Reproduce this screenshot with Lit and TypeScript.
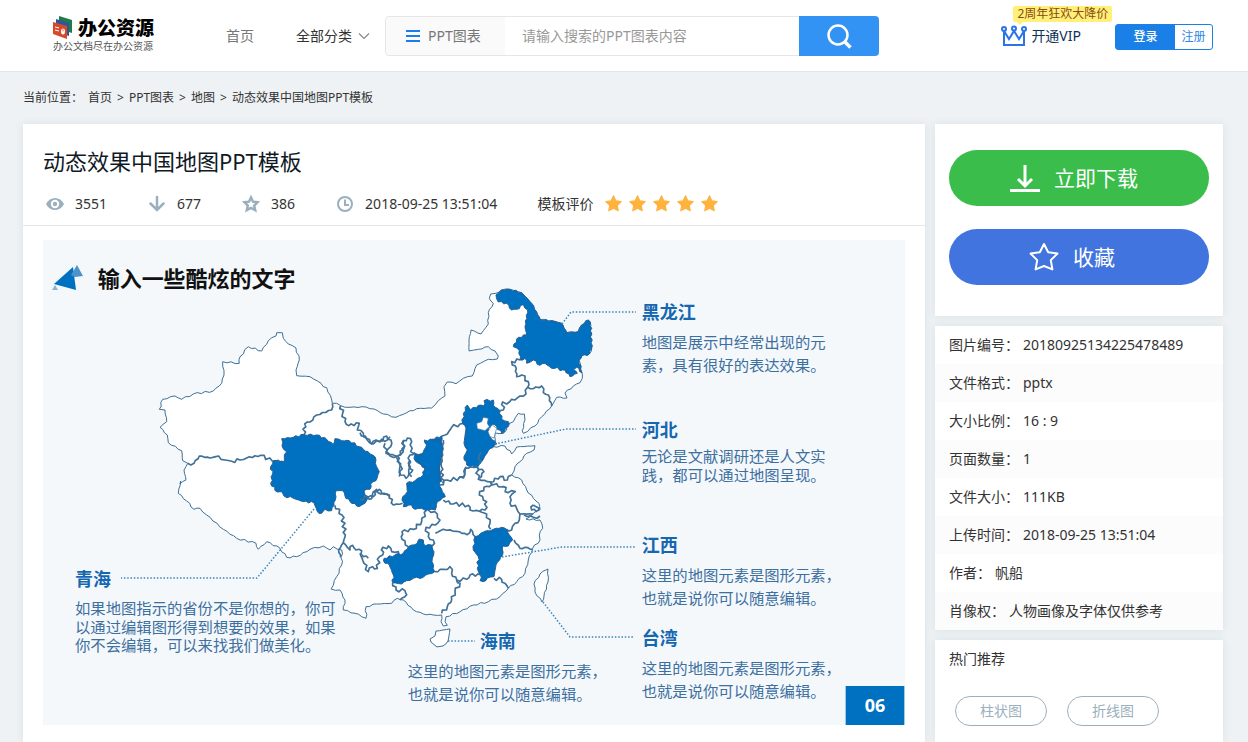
import { LitElement, html, svg, css } from "lit";
import { customElement, property } from "lit/decorators.js";

type Pt = [number, number];

/* Turns a coarse list of points into a slightly ragged border line. */
function border(points: string, step: number, amp: number, closed = false): string {
  const pts = points
    .trim()
    .split(/\s+/)
    .map((p) => p.split(",").map(Number) as Pt);
  if (closed) pts.push(pts[0]);
  let d = `M${pts[0][0]} ${pts[0][1]}`;
  let side = 1;
  for (let i = 1; i < pts.length; i++) {
    const [ax, ay] = pts[i - 1];
    const [bx, by] = pts[i];
    const len = Math.hypot(bx - ax, by - ay);
    const n = Math.max(1, Math.round(len / step));
    for (let k = 1; k < n; k++) {
      const t = k / n;
      const noise = Math.abs(Math.sin(ax * 12.9 + by * 78.2 + k * 37.7));
      const off = (side * amp * noise) / (len || 1);
      side = -side;
      d += `L${(ax + (bx - ax) * t - (by - ay) * off).toFixed(1)} ${(ay + (by - ay) * t + (bx - ax) * off).toFixed(1)}`;
    }
    d += `L${bx} ${by}`;
  }
  return closed ? d + "Z" : d;
}

const COAST =
  "276.7,332.7 282.3,332.7 283.3,338.3 288.3,344 296,348 299.3,360 296,370 296.7,375.7 310,376.7 321,383.3 323.3,386.7 326.7,387.7 331.7,400 332.3,403.3 336.7,403.3 340.7,405.7 350,407.3 366,407 374,409 383.3,414 396,417.3 406.7,412.7 416.7,408.7 431.7,408 438.3,400.7 445,396 444,386.7 447.3,382 456,383.7 463.3,378.3 472.3,376 476.7,365 488.3,359.3 497.3,359 498.3,356 495,351 488.3,346.7 478.3,349.3 469,351 469,340 471,330 481,334 488.3,324 488.3,312.7 493.3,303.3 489.3,298.3 490.7,294 496,293.3 501.7,290 510,289.3 521.7,292.7 531.7,303.3 540.3,319.7 551.7,320.7 561.7,323.3 566.7,332.7 578.3,331.7 581.7,325 588.3,320 590,321.7 591.7,348.3 589.3,354 581.7,356 579,360 581.7,371.7 582.3,378.3 580,382.7 573.3,386 565,393 567,398 556.7,397.3 551.7,406 541.7,416.7 535,426 523.3,433.3 522.3,430.7 525,420 524.3,414 518.3,413.3 513.3,421.7 506.7,424 506.7,430 503.3,433.3 495,433 495,443.3 493.3,446.7 505,446 511.7,454 516.7,447 535,445.7 534,450 526.7,453.3 520,461.7 515,466.7 511.7,475 521.7,480 526.7,490 533.3,498.3 539,503.3 540,510 533.3,513.3 526,519 540,520 542.7,528.3 539.3,535 540,540 532.7,548.3 528.3,560 525,573.3 516.7,581.7 508.3,588.3 500,596.7 488.3,601.7 473.3,605 460,611.7 446,616.7 445,621.7 447.3,625.3 443.3,626 441,621.7 441.7,615 433.3,615 423.3,614 413.3,610 403.3,600 397.3,598.3 391.7,603.3 376.7,604 366,606.7 366,618.3 361.7,616.7 355,613.3 343.3,610 345,600 340,590 331,589 336.7,576.7 341.7,565 341.7,550 333.3,546.7 330,550 323.3,546 310,549.3 296.7,556.7 286.7,557.3 280,548.3 266.7,541.7 258.3,549.3 256,543.3 236.7,538.3 223.3,529.3 206.7,515 200,508.3 194,509.3 186.7,501 178.3,493.3 180.7,481 180,484 186,480 184,470 187.7,463.3 182.7,460.7 181.7,450.7 168.3,442.7 167.3,435 160,427.3 166.7,421.7 165,410 159.3,409.3 162.7,399.3 175,396 181.7,399.3 193.3,394 213.3,391 221.7,383.3 224,375 222.7,361.7 239.3,363.3 240,356.7 248.3,346.7 261.7,351 268.3,340.7 276,336";

interface Layer {
  at: string;
  fills: string[];
  lines: string[];
}

const LAYERS: Layer[] = [
  {
    at: "translate(150 320) scale(.3333)",
    fills: [
      "395,356 430,352 462,344 500,345 530,358 550,374 555,356 575,362 598,362 628,380 640,388 668,405 678,420 680,440 688,455 678,482 662,492 660,508 642,512 645,525 655,530 645,550 628,560 600,545 585,528 578,512 558,512 556,540 545,572 525,568 515,580 502,575 492,548 460,545 430,535 402,528 395,515 382,516 362,490 368,462 362,440 370,422 403,426 403,405 410,395 396,378",
    ],
    lines: [
      "113,430 132,430 148,408 180,414 206,408 225,420 245,424 270,420 290,414 332,406 366,422 403,426",
      "462,344 464,312 480,306 500,285 545,270 547,250",
      "572,257 578,280 585,305 596,317 628,310 622,330 640,340 650,355 670,372 680,362 712,360 720,350",
      "555,556 576,585 586,645 580,668 600,690 608,676 618,690 635,692 640,710 655,715",
      "645,530 670,530 680,508 692,522 712,524 720,530",
      "580,668 566,690 572,712",
    ],
  },
  {
    at: "translate(360 280) scale(.3333)",
    fills: [
      "408,45 425,30 450,28 485,38 515,70 541,119 575,122 605,130 620,158 655,155 665,135 685,120 692,128 695,205 688,222 665,228 657,240 666,278 650,262 640,270 652,280 630,290 615,270 600,272 592,262 575,265 555,250 540,256 520,240 500,250 495,235 480,240 478,210 460,200 475,172 500,165 495,140 503,90 490,74 470,88 455,90 440,70 415,66",
      "310,400 322,375 332,390 355,376 372,378 372,362 400,360 400,376 420,392 425,418 445,425 445,440 425,460 410,440 398,432 385,445 390,470 410,492 385,512 365,545 352,562 320,555 312,530 322,510 312,490 318,445 308,430",
      "165,520 195,525 203,490 215,478 245,468 247,510 238,560 244,605 195,605 190,590 195,565 175,550 162,535",
    ],
    lines: [
      "0,458 20,478 35,492 48,480 60,485 80,468 93,480 92,500 78,515 90,528 112,528 120,560 118,590",
      "112,528 130,515 130,482 142,474 155,485 152,515 165,520",
      "150,540 146,570 155,590",
      "245,468 262,462 275,442 300,432 318,436",
      "480,240 455,245 466,258 470,290 485,285 505,305 503,322 520,326 545,318 550,338 565,345 575,378",
      "503,322 498,342 480,348 465,360 455,358 440,372 428,366 430,390 420,392",
      "318,560 312,590 296,594",
      "352,562 372,575 358,595",
    ],
  },
  {
    at: "translate(360 440) scale(.3333)",
    fills: [
      "193,0 240,0 247,30 238,80 240,140 256,170 232,185 226,210 205,210 185,205 165,208 155,195 130,200 128,170 142,155 140,130 165,122 190,105 193,80 165,60 185,45 200,15",
      "72,355 105,345 130,340 145,320 172,310 178,297 190,300 195,318 215,315 222,335 216,365 224,395 205,402 190,412 160,415 140,422 125,432 98,428 100,405 88,375 75,370",
      "345,290 362,280 380,272 400,268 425,262 440,268 448,285 458,300 445,318 428,318 428,345 408,375 402,410 382,414 370,425 360,422 362,405 352,385 355,350 340,330",
    ],
    lines: [
      "75,10 78,40 108,48 122,78 122,105 138,115 158,90 146,75 150,45 165,38",
      "112,48 130,30 132,0",
      "0,178 22,172 35,176 40,155 58,148 65,160 88,165 100,195 128,190",
      "200,210 185,245 160,268 126,275 126,298 145,320",
      "0,340 12,370 25,395 38,380 52,385 58,350 68,345 64,330 85,318 95,335 115,335 118,348",
      "205,210 232,222 240,240 226,255 198,262 205,290 220,300 218,330",
      "226,280 250,268 290,274 322,284 332,268 345,290",
      "250,180 280,192 325,196 330,210 358,214 380,222 390,250 392,268",
      "240,135 262,120 310,114 316,84 350,80 355,118 392,126 388,140 372,142 358,165 370,180 380,185 375,210 358,214",
      "360,72 355,55 365,35",
      "392,126 420,110 442,120 455,105",
      "392,126 415,140 430,140 444,158 466,155 450,170 450,190 470,205 480,222 520,222",
      "480,222 478,240 465,250 455,270 440,268",
      "462,300 480,325 495,322 518,328",
      "224,395 250,388 270,380 275,400 290,420 300,430 285,455 275,480 262,500 245,520",
      "290,420 320,418 330,405 362,405",
      "402,415 425,418 435,430 445,445",
      "98,428 108,450 135,452 140,465 120,480",
      "248,130 244,80 250,0",
      "520,195 515,210 528,215 538,205 520,195",
      "492,225 520,232 540,228",
    ],
  },
];

const ISLANDS = [
  "546,570 548,569 548,582 544,596 542,602 535,592 534,584 540,574",
  "436,631 443,630 450,629 449,636 448,641 443,646 437,647 431,642 430,639 435,636",
];

const LEADERS = [
  "M562 324L571 312H636",
  "M495 444L566 429H636",
  "M502 557L562 547H636",
  "M543 602L570 637H634",
  "M448 641H475",
  "M314 509L257 578H121",
];

interface Note {
  name: string;
  x: number;
  y: number;
  textX: number;
  lines: [string, number][];
}

const NOTES: Note[] = [
  { name: "黑龙江", x: 898, y: 118, textX: 898, lines: [["地图是展示中经常出现的元", 162], ["素，具有很好的表达效果。", 196]] },
  { name: "河北", x: 898, y: 296, textX: 898, lines: [["无论是文献调研还是人文实", 333], ["践，都可以通过地图呈现。", 361]] },
  { name: "江西", x: 898, y: 468, textX: 898, lines: [["这里的地图元素是图形元素，", 512], ["也就是说你可以随意编辑。", 546]] },
  { name: "台湾", x: 898, y: 607, textX: 898, lines: [["这里的地图元素是图形元素，", 651], ["也就是说你可以随意编辑。", 685]] },
  { name: "海南", x: 655, y: 612, textX: 547, lines: [["这里的地图元素是图形元素，", 656], ["也就是说你可以随意编辑。", 690]] },
  { name: "青海", x: 48, y: 519, textX: 48, lines: [["如果地图指示的省份不是你想的，你可", 561], ["以通过编辑图形得到想要的效果，如果", 589], ["你不会编辑，可以来找我们做美化。", 617]] },
];

const STAR = "M8 .8l2.2 4.7 5.1.7-3.7 3.6.9 5.1L8 12.4l-4.5 2.5.9-5.1L.7 6.2l5.1-.7z";

@customElement("map-slide")
export class MapSlide extends LitElement {
  static styles = css`
    :host { display: block; }
    .slide { display: block; width: 100%; height: auto; font-family: "Noto Sans", "Noto Sans CJK SC", sans-serif; }
    .land { fill: #fff; stroke: #3d6f97; stroke-width: 1; stroke-linejoin: round; }
    .hot { fill: #0070c0; stroke: #245f96; stroke-width: 3; }
    .line { fill: none; stroke: #3f7199; stroke-width: 5; stroke-linejoin: round; }
    .hole { fill: #fff; stroke: #3d6f97; stroke-width: 2; }
    .leader { fill: none; stroke: #3a84ba; stroke-width: 1.5; stroke-dasharray: 1.5 1.8; }
    .heading { font-size: 33px; font-weight: 700; fill: #111; }
    .name { font-size: 27px; font-weight: 700; fill: #1567b0; }
    .note { font-size: 23px; fill: #3d6f9f; }
    .number { font-size: 27px; font-weight: 700; fill: #fff; text-anchor: middle; }
  `;

  render() {
    return html`
      <svg class="slide" viewBox="0 0 1293 728" role="img" aria-label="动态效果中国地图">
        <rect width="1293" height="728" fill="#f4f8fb" />
        <g transform="translate(-64.5 -360) scale(1.5)">
          <path d="M54 284L73 267L76 290Z" fill="#0070c0" />
          <path d="M71 275L77 265L83 276L75 277Z" fill="#4e92ca" />
          <path d="M52 290L55 285L58 290Z" fill="#8fb4d0" />
          <path class="land" d=${border(COAST, 4, 0.8, true)} />
          ${ISLANDS.map((p) => svg`<path class="land" d=${border(p, 4, 0.7, true)} />`)}
          ${LAYERS.map(
            (l) => svg`<g transform=${l.at}>
              ${l.lines.map((p) => svg`<path class="line" d=${border(p, 9, 5)} />`)}
              ${l.fills.map((p) => svg`<path class="hot" d=${border(p, 9, 3, true)} />`)}
            </g>`
          )}
          <g transform="translate(360 280) scale(.3333)">
            <path class="hole" d="M350 430L365 425L370 412L385 415L382 430L388 440L375 452L352 446Z" />
            <path class="hole" d="M396 434L410 445L405 462L402 474L390 470L384 455Z" />
          </g>
          ${LEADERS.map((d) => svg`<path class="leader" d=${d} />`)}
        </g>
        <text class="heading" x="82" y="70">输入一些酷炫的文字</text>
        ${NOTES.map(
          (n) => svg`<text class="name" x=${n.x} y=${n.y}>${n.name}</text>
            ${n.lines.map(([t, y]) => svg`<text class="note" x=${n.textX} y=${y}>${t}</text>`)}`
        )}
        <rect x="1204" y="669" width="88" height="59" fill="#0070c0" />
        <text class="number" x="1248" y="708">06</text>
      </svg>
    `;
  }
}

@customElement("site-header")
export class SiteHeader extends LitElement {
  static styles = css`
    :host { display: block; background: #fff; border-bottom: 1px solid #e4e7e9; }
    * { box-sizing: border-box; }
    a { color: inherit; text-decoration: none; }
    .bar { display: flex; align-items: center; height: 71px; padding: 0 35px 0 53px; font-size: 14px; line-height: 20px; }
    .logo { display: grid; grid-template-columns: 22px 1fr; column-gap: 3px; width: 102px; margin-top: -4px; flex: none; }
    .mark { display: block; width: 20px; height: 24px; }
    .brand { font-size: 19px; font-weight: 900; line-height: 24px; color: #000; white-space: nowrap; }
    .slogan { grid-column: 1 / -1; font-size: 10px; line-height: 12px; color: #555; white-space: nowrap; }
    .nav { display: flex; gap: 42px; margin-left: 71px; white-space: nowrap; }
    .home { color: #777; }
    .all { display: flex; align-items: center; gap: 6px; color: #333; }
    .search { display: flex; flex: 0 1 494px; height: 40px; margin: 1px auto 0 15px; border-radius: 4px; overflow: hidden; }
    .kind { display: flex; align-items: center; gap: 8px; width: 120px; padding: 0 0 0 20px; border: 1px solid #e6e6e6; border-right: 0; border-radius: 4px 0 0 4px; background: #fafafa; color: #777; font: inherit; }
    .box { flex: 1; min-width: 0; padding: 0 17px; border: solid #e6e6e6; border-width: 1px 0; background: #fff; color: #333; font: inherit; outline: 0; }
    .box::placeholder { color: #999; opacity: 1; }
    .go { display: grid; place-items: center; width: 80px; padding: 0; border: 0; background: #3393f5; }
    .vip { position: relative; display: flex; align-items: center; gap: 4px; margin-right: 34px; color: #0d3357; white-space: nowrap; }
    .tip { position: absolute; left: 12px; bottom: 25px; padding: 0 4px; border-radius: 2px; background: #fff07a; color: #8a4b10; font-size: 12px; line-height: 16px; }
    .tip::after { content: ""; position: absolute; left: 4px; top: 16px; border: 3px solid transparent; border-top-color: #fff07a; border-bottom: 0; }
    .account { display: flex; height: 26px; margin-top: 3px; border: 1px solid #1a7fe6; border-radius: 3px; font-size: 12px; line-height: 24px; text-align: center; white-space: nowrap; }
    .login { width: 59px; background: #1a7fe6; color: #fff; font-weight: 500; }
    .join { width: 37px; color: #2f86e8; }
  `;

  render() {
    return html`
      <header class="bar">
        <a class="logo" href="#">
          <svg class="mark" viewBox="0 0 20 24" aria-hidden="true">
            <path d="M6 0l13 4v13l-13-4z" fill="#1f7a4c" />
            <path d="M3 3l13 4v13l-13-4z" fill="#2b579a" />
            <path d="M0 6l14 4v13l-14-5z" fill="#d6492a" />
            <path d="M2 11l4 1M2 14l4 1" stroke="#fff" />
            <ellipse cx="10" cy="15.5" rx="2" ry="3" fill="#fff" />
            <path d="M10 12.500v3" stroke="#d6492a" stroke-width=".7" />
          </svg>
          <span class="brand">办公资源</span>
          <span class="slogan">办公文档尽在办公资源</span>
        </a>
        <nav class="nav">
          <a class="home" href="#">首页</a>
          <a class="all" href="#">全部分类
            <svg width="12" height="8" viewBox="0 0 12 8" fill="none" stroke="#888" stroke-width="1.200"><path d="M1 1.500l5 5 5-5" /></svg>
          </a>
        </nav>
        <form class="search" @submit=${(e: Event) => e.preventDefault()}>
          <button class="kind" type="button">
            <svg width="14" height="12" viewBox="0 0 14 12" fill="#1a7cf0"><path d="M0 0h14v2H0zM0 5h14v2H0zM0 10h14v2H0z" /></svg>
            PPT图表
          </button>
          <input class="box" type="text" aria-label="搜索" placeholder="请输入搜索的PPT图表内容" />
          <button class="go" type="submit" aria-label="搜索">
            <svg width="26" height="26" viewBox="0 0 26 26" fill="none" stroke="#fff"><circle cx="12" cy="12" r="9.500" stroke-width="2.500" /><path d="M18 18l6.500 6.500" stroke-width="3.500" /></svg>
          </button>
        </form>
        <a class="vip" href="#">
          <svg width="26" height="22" viewBox="0 0 26 22" fill="none" stroke="#2b74e8" stroke-width="2">
            <path d="M3 6v14h20V6l-5 8-5-8-5 8z" /><circle cx="3" cy="4" r="2" fill="#fff" /><circle cx="13" cy="3.500" r="2" fill="#fff" /><circle cx="23" cy="4" r="2" fill="#fff" />
          </svg>
          开通VIP
          <span class="tip">2周年狂欢大降价</span>
        </a>
        <div class="account"><a class="login" href="#">登录</a><a class="join" href="#">注册</a></div>
      </header>
    `;
  }
}

@customElement("info-list")
export class InfoList extends LitElement {
  @property({ attribute: false }) rows: [string, string][] = [];

  static styles = css`
    :host { display: block; }
    .list { margin: 0; }
    .row { display: flex; gap: 4px; padding: 0 14px; font-size: 14px; line-height: 38px; color: #333; white-space: nowrap; }
    .row:nth-child(even) { background: #fcfcfc; }
    .value { margin: 0; }
  `;

  render() {
    return html`<dl class="list">
      ${this.rows.map(([k, v]) => html`<div class="row"><dt>${k}：</dt><dd class="value">${v}</dd></div>`)}
    </dl>`;
  }
}

@customElement("app-root")
export class AppRoot extends LitElement {
  static styles = css`
    :host { display: flex; flex-direction: column; min-height: 100vh; background: #eef2f5; color: #333; font-family: "Noto Sans", "Noto Sans CJK SC", sans-serif; font-size: 14px; line-height: 20px; }
    * { box-sizing: border-box; }
    a { color: inherit; text-decoration: none; }
    .crumbs { display: flex; gap: 5px; padding: 16px 23px; font-size: 12px; line-height: 20px; white-space: nowrap; }
    .page { display: grid; grid-template-columns: minmax(0, 1fr) 288px; gap: 10px; flex: 1; padding: 0 25px 0 23px; }
    .card { background: #fff; box-shadow: 0 0 8px rgba(70, 95, 115, 0.12); }
    .head { padding: 21px 20px 11px; border-bottom: 1px solid #e6e6e6; }
    .title { margin: 0 0 16px; font-size: 22px; font-weight: 400; line-height: 32px; color: #0f1a26; }
    .stats { display: flex; align-items: center; height: 21px; white-space: nowrap; }
    .stat { display: flex; align-items: center; gap: 8px; margin-right: 38px; }
    .icon { width: 24px; height: 20px; color: #9ab0bf; }
    .rate { display: flex; align-items: center; gap: 12px; padding-left: 2px; }
    .stars { display: flex; gap: 7px; }
    .picture { padding: 14px 20px 17px; }
    .side { display: flex; flex-direction: column; gap: 10px; }
    .actions { display: grid; gap: 23px; padding: 26px 14px 31px; }
    .action { display: flex; align-items: center; justify-content: center; gap: 14px; height: 56px; padding: 0 10px 0 0; border: 0; border-radius: 28px; color: #fff; font: inherit; font-size: 21px; }
    .download { background: #3abd4a; }
    .collect { background: #4174de; padding-right: 14px; }
    .hot { flex: 1; padding: 0 14px; }
    .hot-title { margin: 0 0 18px; font-size: 14px; font-weight: 400; line-height: 38px; }
    .tags { display: flex; gap: 20px; padding: 0 6px 16px; }
    .tag { width: 92px; height: 30px; border: 1px solid #9bb0bd; border-radius: 15px; color: #9bb0bd; line-height: 28px; text-align: center; }
  `;

  private rows: [string, string][] = [
    ["图片编号", "20180925134225478489"],
    ["文件格式", "pptx"],
    ["大小比例", "16 : 9"],
    ["页面数量", "1"],
    ["文件大小", "111KB"],
    ["上传时间", "2018-09-25 13:51:04"],
    ["作者", "帆船"],
    ["肖像权", "人物画像及字体仅供参考"],
  ];

  render() {
    return html`
      <site-header></site-header>
      <nav class="crumbs">
        <span>当前位置：</span><a href="#">首页</a><span>&gt;</span><a href="#">PPT图表</a><span>&gt;</span><a href="#">地图</a><span>&gt;</span><span>动态效果中国地图PPT模板</span>
      </nav>
      <div class="page">
        <main class="card">
          <div class="head">
            <h1 class="title">动态效果中国地图PPT模板</h1>
            <div class="stats">
              <span class="stat">
                <svg class="icon" viewBox="0 0 24 20"><path d="M3 10C5 6 8.500 4 12 4s7 2 9 6c-2 4-5.500 6-9 6s-7-2-9-6z" fill="currentColor" /><circle cx="12" cy="10" r="3.200" fill="none" stroke="#fff" stroke-width="2" /></svg>3551
              </span>
              <span class="stat">
                <svg class="icon" viewBox="0 0 24 20" fill="none" stroke="currentColor" stroke-width="2.500" stroke-linecap="round"><path d="M12 3v13M5.500 9.500L12 16l6.500-6.500" /></svg>677
              </span>
              <span class="stat">
                <svg class="icon" viewBox="0 0 24 20" fill="none" stroke="currentColor" stroke-width="2.500"><path d="M12 3.500l2 4.200 4.500.500-3.300 3.400 1 4.600L12 14l-4.200 2.200 1-4.600L5.500 8.200l4.500-.500z" /></svg>386
              </span>
              <span class="stat">
                <svg class="icon" viewBox="0 0 24 20" fill="none" stroke="currentColor" stroke-width="2"><circle cx="12" cy="10" r="7" /><path d="M12 5.500V11h4" /></svg>2018-09-25 13:51:04
              </span>
              <span class="rate">模板评价
                <span class="stars">
                  ${[1, 2, 3, 4, 5].map(() => html`<svg width="17" height="17" viewBox="0 0 16 16" fill="#ffb23e" stroke="#ffb23e" stroke-linejoin="round"><path d=${STAR} /></svg>`)}
                </span>
              </span>
            </div>
          </div>
          <div class="picture"><map-slide></map-slide></div>
        </main>
        <aside class="side">
          <div class="card actions">
            <button class="action download" type="button">
              <svg width="30" height="28" viewBox="0 0 30 28" fill="none" stroke="#fff" stroke-width="3"><path d="M15 1v21M8 15l7 7 7-7M0 26.500h30" /></svg>立即下载
            </button>
            <button class="action collect" type="button">
              <svg width="30" height="30" viewBox="0 0 30 30" fill="none" stroke="#fff" stroke-width="2" stroke-linejoin="round"><path d="M15 2l4.200 8.300 9.300 1.300-6.700 6.500 1.600 9.300L15 24l-8.400 3.400 1.600-9.300-6.700-6.500 9.300-1.300z" /></svg>收藏
            </button>
          </div>
          <info-list class="card" .rows=${this.rows}></info-list>
          <div class="card hot">
            <h2 class="hot-title">热门推荐</h2>
            <div class="tags"><a class="tag" href="#">柱状图</a><a class="tag" href="#">折线图</a></div>
          </div>
        </aside>
      </div>
    `;
  }
}
